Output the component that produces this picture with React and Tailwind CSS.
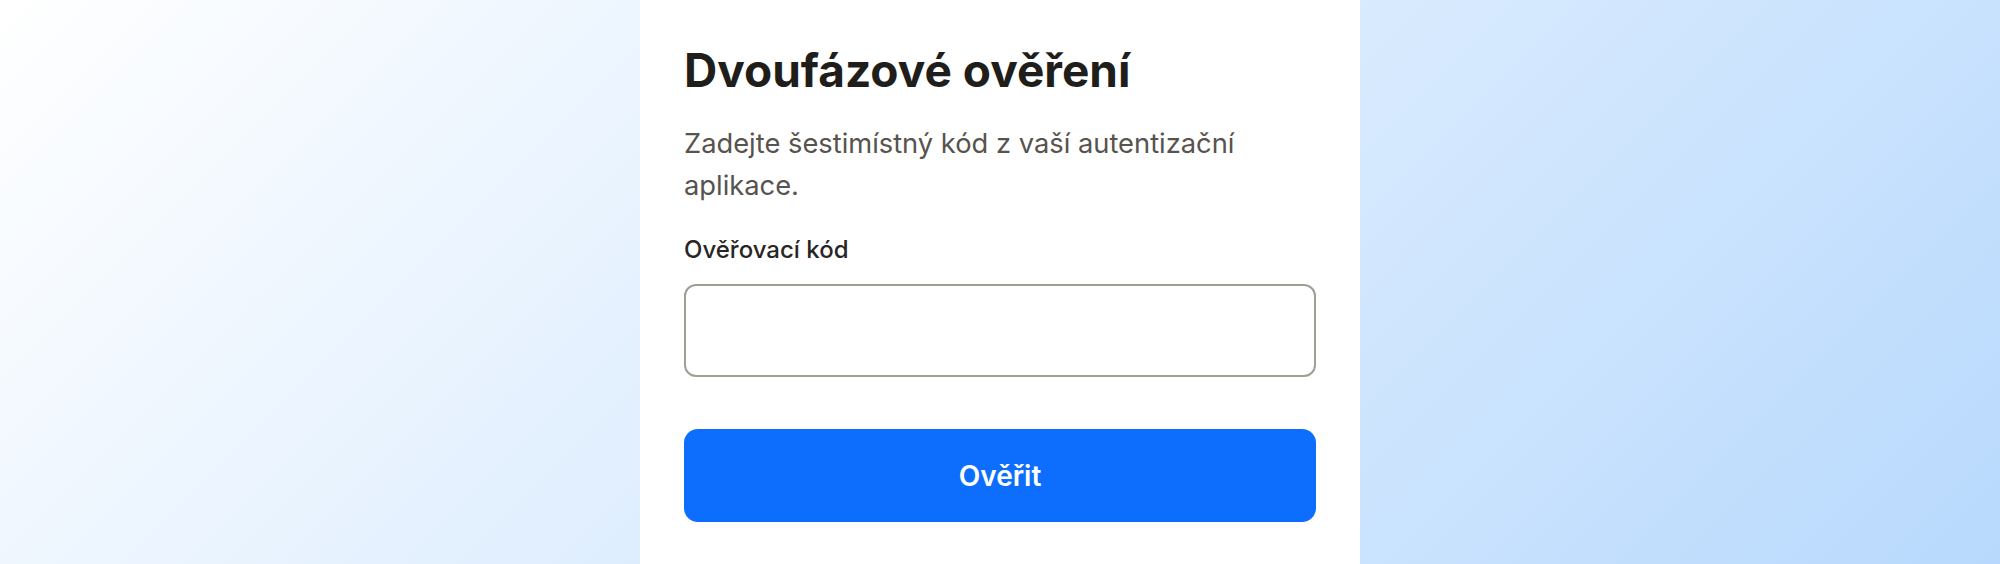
import React from "react";

export default function App() {
  return (
    <div
      className="w-full h-[564px] overflow-hidden flex justify-center bg-[linear-gradient(135deg,#ffffff_0%,#b8d9fd_100%)]"
      style={{ fontFamily: "Inter, 'Noto Sans', sans-serif" }}
    >
      <div className="w-[720px] h-full bg-white px-[44px] pt-[43px] flex flex-col">
        <h1 className="text-[46px] leading-[55px] font-bold text-[#1f1e1b]">
          Dvoufázové ověření
        </h1>
        <p className="mt-[25px] text-[27.3px] leading-[42px] text-[#57534e]">
          Zadejte šestimístný kód z vaší autentizační aplikace.
        </p>
        <label className="mt-[26px] text-[24px] leading-[33px] font-medium text-[#292524]">
          Ověřovací kód
        </label>
        <input
          type="text"
          className="mt-[18px] h-[93px] w-full rounded-[12px] border-2 border-[#a29d95] bg-white px-4 text-[24px] outline-none"
        />
        <button className="mt-[52px] h-[93px] w-full rounded-[14px] bg-[#0d6efd] text-white text-[28px] font-semibold">
          Ověřit
        </button>
      </div>
    </div>
  );
}
